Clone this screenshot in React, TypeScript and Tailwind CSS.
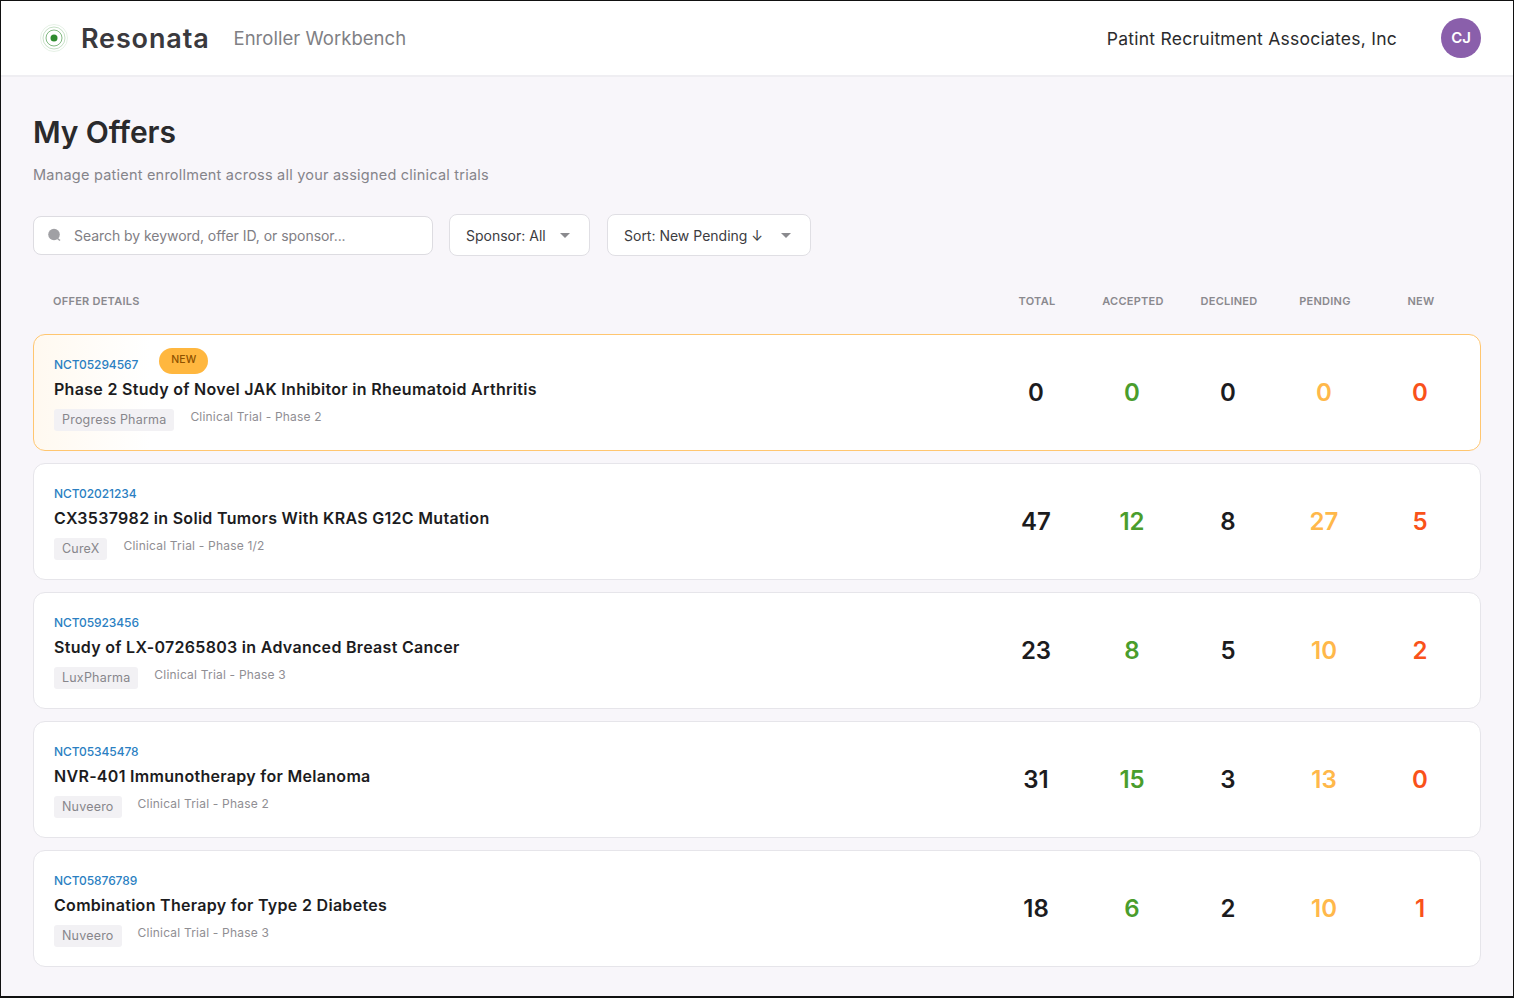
const offers = [
  { id: 'NCT05294567', title: 'Phase 2 Study of Novel JAK Inhibitor in Rheumatoid Arthritis', sponsor: 'Progress Pharma', phase: 'Clinical Trial - Phase 2', total: 0, accepted: 0, declined: 0, pending: 0, fresh: 0, isNew: true },
  { id: 'NCT02021234', title: 'CX3537982 in Solid Tumors With KRAS G12C Mutation', sponsor: 'CureX', phase: 'Clinical Trial - Phase 1/2', total: 47, accepted: 12, declined: 8, pending: 27, fresh: 5 },
  { id: 'NCT05923456', title: 'Study of LX-07265803 in Advanced Breast Cancer', sponsor: 'LuxPharma', phase: 'Clinical Trial - Phase 3', total: 23, accepted: 8, declined: 5, pending: 10, fresh: 2 },
  { id: 'NCT05345478', title: 'NVR-401 Immunotherapy for Melanoma', sponsor: 'Nuveero', phase: 'Clinical Trial - Phase 2', total: 31, accepted: 15, declined: 3, pending: 13, fresh: 0 },
  { id: 'NCT05876789', title: 'Combination Therapy for Type 2 Diabetes', sponsor: 'Nuveero', phase: 'Clinical Trial - Phase 3', total: 18, accepted: 6, declined: 2, pending: 10, fresh: 1 },
];

function Logo() {
  return (
    <svg width="30" height="30" viewBox="0 0 30 30" fill="none" className="shrink-0">
      <circle cx="15" cy="15" r="13.5" stroke="#2e8b2e" strokeOpacity="0.12" />
      <circle cx="15" cy="15" r="11" stroke="#2e8b2e" strokeOpacity="0.28" />
      <circle cx="15" cy="15" r="8" stroke="#2e8b2e" strokeOpacity="0.6" />
      <circle cx="15" cy="15" r="3.5" fill="#2e8b2e" />
    </svg>
  );
}

function Caret() {
  return (
    <svg width="10" height="5" viewBox="0 0 10 5" className="shrink-0">
      <path d="M0 0h10L5 5z" fill="#8a8a8e" />
    </svg>
  );
}

function OfferRow({ offer }: { offer: (typeof offers)[number] }) {
  return (
    <div
      className={`grid h-[117px] grid-cols-[1fr_96px_96px_96px_96px_96px] items-center rounded-xl border bg-white pl-5 pr-3 ${
        offer.isNew ? 'border-[#ffc670] bg-gradient-to-r from-[#fff9f0] to-white to-[8%]' : 'border-[#e6e5ea]'
      }`}
    >
      <div className="flex h-full flex-col pt-[1px]">
        <div className="flex h-[39px] items-start">
          <span className="mt-[21px] text-[12px] leading-[16px] font-medium tracking-[-0.08px] text-[#2b7fc2]">{offer.id}</span>
          {offer.isNew && (
            <span className="mt-[12px] ml-[21px] flex h-[26px] w-[49px] items-center justify-center rounded-full bg-[#ffb73f] pb-[2px] text-[10.5px] font-medium text-[#8f5200]">
              NEW
            </span>
          )}
        </div>
        <div className="mt-[4px] text-[16px] leading-[20px] font-semibold tracking-[0.3px] text-[#1c1c1e]">{offer.title}</div>
        <div className="mt-[9px] flex items-start gap-4">
          <span className="mt-[1px] flex h-[22px] items-center rounded-[3px] bg-[#f2f1f4] px-2 text-[12.5px] tracking-[0.2px] text-[#87868b]">{offer.sponsor}</span>
          <span className="text-[12px] leading-[18px] tracking-[0.2px] text-[#8f8e93]">{offer.phase}</span>
        </div>
      </div>
      <div className="text-center text-[24px] font-semibold text-[#1c1c1e]">{offer.total}</div>
      <div className="text-center text-[24px] font-semibold text-[#4a9d2c]">{offer.accepted}</div>
      <div className="text-center text-[24px] font-semibold text-[#1c1c1e]">{offer.declined}</div>
      <div className="text-center text-[24px] font-semibold text-[#ffb84a]">{offer.pending}</div>
      <div className="text-center text-[24px] font-semibold text-[#f9521a]">{offer.fresh}</div>
    </div>
  );
}

export default function App() {
  return (
    <div className="h-[998px] overflow-hidden border border-b-2 border-[#111] bg-[#f8f6fa] font-['Inter',sans-serif]">
      <header className="flex h-[76px] items-center border-b-2 border-[#efeef2] bg-white pr-8 pl-[38px]">
        <Logo />
        <span className="mt-[2px] ml-[12px] text-[27px] font-semibold tracking-[0.85px] text-[#3a393d]">Resonata</span>
        <span className="mt-[2px] ml-6 text-[18.5px] tracking-[0.03px] text-[#807f84]">Enroller Workbench</span>
        <span className="mt-[2px] ml-auto text-[17.5px] tracking-[0.25px] text-[#2b2b2d]">Patint Recruitment Associates, Inc</span>
        <div className="ml-[44px] flex h-10 w-10 items-center justify-center rounded-full bg-[#8a5fab] text-[15px] font-semibold text-white">CJ</div>
      </header>

      <main className="px-8">
        <h1 className="mt-[35px] text-[30px] leading-[40px] font-semibold tracking-[-0.1px] text-[#2a2a2c]">My Offers</h1>
        <p className="mt-[13px] text-[14.5px] leading-[20px] tracking-[0.22px] text-[#85848a]">Manage patient enrollment across all your assigned clinical trials</p>

        <div className="mt-[29px] flex items-center">
          <div className="flex h-[39px] w-[400px] items-center rounded-lg border border-[#dddce1] bg-white pl-[13px]">
            <svg width="15" height="15" viewBox="0 0 15 15" className="shrink-0">
              <circle cx="7" cy="6.5" r="5.8" fill="#a0a0a4" />
              <path d="M10.5 10.5l2.5 2" stroke="#a0a0a4" strokeWidth="1.6" />
            </svg>
            <span className="ml-3 text-[14px] tracking-[-0.05px] text-[#7f7e84]">Search by keyword, offer ID, or sponsor...</span>
          </div>
          <div className="ml-4 flex h-[42px] w-[141px] items-center justify-between rounded-lg border border-[#e0dfe4] bg-white pr-[19px] pl-4 text-[14px] text-[#3c3c3f]">
            Sponsor: All
            <Caret />
          </div>
          <div className="ml-[17px] flex h-[42px] w-[204px] items-center justify-between rounded-lg border border-[#e0dfe4] bg-white pr-[19px] pl-4 text-[14px] text-[#3c3c3f]">
            Sort: New Pending ↓
            <Caret />
          </div>
        </div>

        <div className="mt-[36px] grid grid-cols-[1fr_96px_96px_96px_96px_96px] pr-3 pl-5 text-[11px] leading-[18px] font-semibold tracking-[0.25px] text-[#8a898e]">
          <div>OFFER DETAILS</div>
          <div className="text-center">TOTAL</div>
          <div className="text-center">ACCEPTED</div>
          <div className="text-center">DECLINED</div>
          <div className="text-center">PENDING</div>
          <div className="text-center">NEW</div>
        </div>

        <div className="mt-[24px] flex flex-col gap-3">
          {offers.map((offer) => (
            <OfferRow key={offer.id} offer={offer} />
          ))}
        </div>
      </main>
    </div>
  );
}
